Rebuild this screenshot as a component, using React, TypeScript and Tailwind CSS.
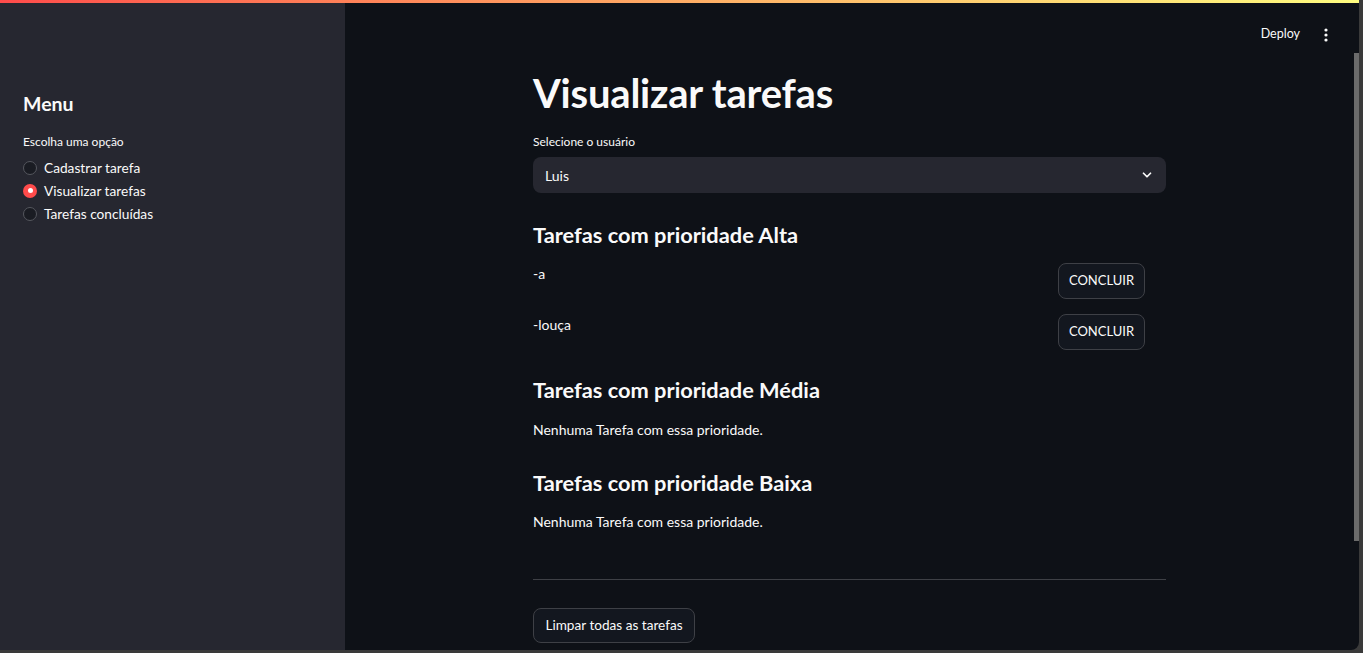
import React from "react";

const font = { fontFamily: "Lato, 'Noto Sans', sans-serif" };

function Radio({ label, checked }: { label: string; checked?: boolean }) {
  return (
    <div className="flex items-center h-[23px] gap-[7px]">
      {checked ? (
        <span className="w-[14px] h-[14px] rounded-full bg-[#ff4b4b] flex items-center justify-center">
          <span className="w-[5px] h-[5px] rounded-full bg-white" />
        </span>
      ) : (
        <span className="w-[14px] h-[14px] rounded-full border border-[#55575e] bg-[#1a1c23]" />
      )}
      <span className="text-[13.7px] text-[#fafafa] leading-[20px]">{label}</span>
    </div>
  );
}

function Task({ text }: { text: string }) {
  return (
    <div className="flex items-start justify-between pr-[21px]">
      <span className="text-[14px] leading-[24px] -mt-[1px]">{text}</span>
      <button className="h-[36px] w-[87px] rounded-[8px] border border-[#3e4046] bg-[#13171f] text-[13px] text-[#fafafa]">
        CONCLUIR
      </button>
    </div>
  );
}

export default function App() {
  return (
    <div className="w-[1363px] h-[653px] bg-[#3a3a3a] overflow-hidden" style={font}>
      <div className="w-[1359px] h-[650px] rounded-br-[8px] overflow-hidden flex flex-col bg-[#0e1117] text-[#fafafa]">
        <div className="h-[3px] bg-gradient-to-r from-[#ff4b4b] to-[#fffd80] shrink-0" />
        <div className="flex flex-1 min-h-0">
          <aside className="w-[345px] shrink-0 bg-[#262730] pl-[23px] pt-[89px]">
            <h2 className="text-[19.5px] font-bold leading-[24px]">Menu</h2>
            <div className="text-[12px] leading-[16px] mt-[18px]">Escolha uma opção</div>
            <div className="mt-[6px] flex flex-col">
              <Radio label="Cadastrar tarefa" />
              <Radio label="Visualizar tarefas" checked />
              <Radio label="Tarefas concluídas" />
            </div>
          </aside>
          <main className="flex-1 flex">
            <div className="flex-1 flex flex-col">
              <div className="h-[63px] flex items-center justify-end pr-[20px] gap-[18px] shrink-0">
                <span className="text-[12.5px]">Deploy</span>
                <svg width="16" height="16" viewBox="0 0 16 16" fill="#fafafa">
                  <circle cx="8" cy="3" r="1.6" />
                  <circle cx="8" cy="8" r="1.6" />
                  <circle cx="8" cy="13" r="1.6" />
                </svg>
              </div>
              <div className="w-[633px] mx-auto flex flex-col">
                <h1 className="text-[40px] font-bold leading-[52px] mt-[1px] tracking-[-0.2px]">Visualizar tarefas</h1>
                <label className="text-[12px] leading-[20px] mt-[13px]">Selecione o usuário</label>
                <div className="mt-[5px] h-[36px] rounded-[8px] bg-[#262730] flex items-center justify-between px-[12px]">
                  <span className="text-[14px]">Luis</span>
                  <svg width="14" height="14" viewBox="0 0 24 24" fill="none" stroke="#fafafa" strokeWidth="3" strokeLinecap="round" strokeLinejoin="round">
                    <path d="M6 9l6 6 6-6" />
                  </svg>
                </div>
                <h3 className="text-[21.8px] font-bold leading-[36px] mt-[24px]">Tarefas com prioridade Alta</h3>
                <div className="mt-[10px]"><Task text="-a" /></div>
                <div className="mt-[15px]"><Task text="-louça" /></div>
                <h3 className="text-[21.8px] font-bold leading-[36px] mt-[22px]">Tarefas com prioridade Média</h3>
                <p className="text-[14px] leading-[24px] mt-[10px]">Nenhuma Tarefa com essa prioridade.</p>
                <h3 className="text-[21.8px] font-bold leading-[36px] mt-[23px]">Tarefas com prioridade Baixa</h3>
                <p className="text-[14px] leading-[24px] mt-[9px]">Nenhuma Tarefa com essa prioridade.</p>
                <hr className="mt-[45px] border-0 h-px bg-[#3e4046]" />
                <div className="mt-[28px]">
                  <button className="h-[35px] w-[162px] rounded-[8px] border border-[#3e4046] bg-[#13171f] text-[13.6px] text-[#fafafa]">
                    Limpar todas as tarefas
                  </button>
                </div>
              </div>
            </div>
            <div className="w-[5px] shrink-0 flex flex-col">
              <div className="h-[50px]" />
              <div className="h-[488px] bg-[#6b6b6b]" />
            </div>
          </main>
        </div>
      </div>
    </div>
  );
}
